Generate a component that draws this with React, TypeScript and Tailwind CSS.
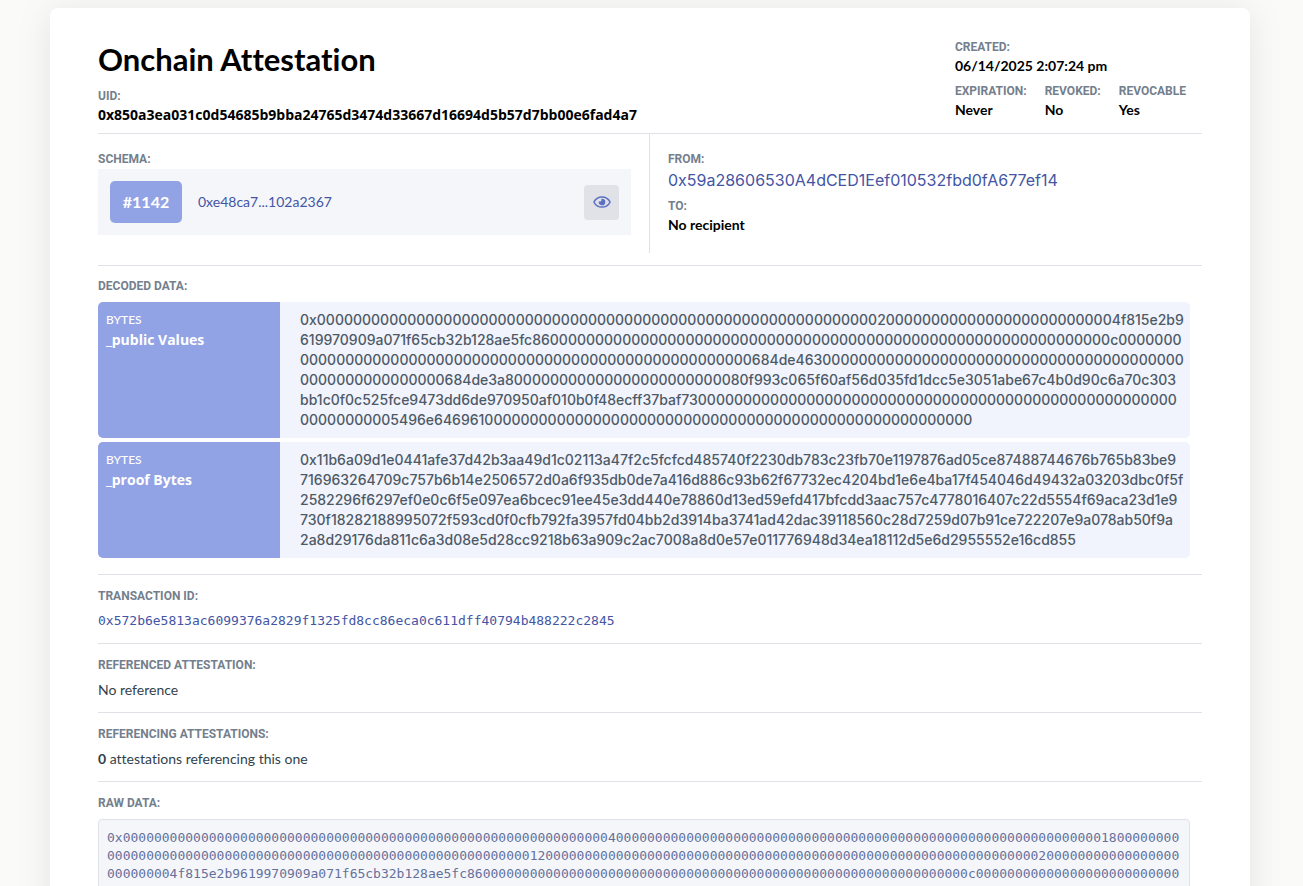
import type { ReactNode } from "react";

const zeros = (n: number) => "0".repeat(n);

const publicValues = [
  `0x${zeros(62)}2${zeros(25)}4f815e2b9`,
  `619970909a071f65cb32b128ae5fc86${zeros(62)}c${zeros(7)}`,
  `${zeros(50)}684de463${zeros(40)}`,
  `${zeros(16)}684de3a8${zeros(24)}80f993c065f60af56d035fd1dcc5e3051abe67c4b0d90c6a70c303`,
  `bb1c0f0c525fce9473dd6de970950af010b0f48ecff37baf73${zeros(53)}`,
  `${zeros(10)}5496e646961${zeros(54)}`,
];

const proofBytes = [
  "0x11b6a09d1e0441afe37d42b3aa49d1c02113a47f2c5fcfcd485740f2230db783c23fb70e1197876ad05ce87488744676b765b83be9",
  "716963264709c757b6b14e2506572d0a6f935db0de7a416d886c93b62f67732ec4204bd1e6e4ba17f454046d49432a03203dbc0f5f",
  "2582296f6297ef0e0c6f5e097ea6bcec91ee45e3dd440e78860d13ed59efd417bfcdd3aac757c4778016407c22d5554f69aca23d1e9",
  "730f18282188995072f593cd0f0cfb792fa3957fd04bb2d3914ba3741ad42dac39118560c28d7259d07b91ce722207e9a078ab50f9a",
  "2a8d29176da811c6a3d08e5d28cc9218b63a909c2ac7008a8d0e57e011776948d34ea18112d5e6d2955552e16cd855",
];

const rawData = [
  `0x${zeros(62)}40${zeros(61)}18${zeros(8)}`,
  `${zeros(54)}120${zeros(62)}2${zeros(17)}`,
  `${zeros(8)}4f815e2b9619970909a071f65cb32b128ae5fc86${zeros(62)}c${zeros(26)}`,
  `${zeros(31)}684de463${zeros(56)}684de3a8${zeros(24)}80f993c065`,
];

function Label({ children }: { children: ReactNode }) {
  return (
    <h2 className="font-['Roboto',sans-serif] text-xs leading-4 font-bold text-[#747f8d] uppercase">{children}</h2>
  );
}

function Fact({ label, children }: { label: string; children: ReactNode }) {
  return (
    <div>
      <Label>{label}</Label>
      <p className="mt-0.5 text-sm leading-[18px] font-bold text-black">{children}</p>
    </div>
  );
}

function DecodedRow({ type, name, lines }: { type: string; name: string; lines: string[] }) {
  return (
    <div className="mr-3 flex overflow-hidden rounded-[5px] bg-[#f1f3fd]">
      <div className="w-[182px] shrink-0 bg-[#92a3e5] px-2 pt-2 text-white">
        <div className="text-xs leading-5 font-medium">{type}</div>
        <div className="font-['Open_Sans',sans-serif] text-sm leading-5 font-bold">{name}</div>
      </div>
      <div className="min-w-0 py-2 pr-2 pl-5 font-['Inter',sans-serif] text-sm leading-5 font-medium text-[#4d5a66]">
        {lines.map((line, i) => (
          <span key={i} className="block whitespace-nowrap">{line}</span>
        ))}
      </div>
    </div>
  );
}

function Section({ label, children }: { label: string; children: ReactNode }) {
  return (
    <section className="border-t border-[#dfe1e6] pt-[13px] pb-3">
      <Label>{label}</Label>
      <div className="mt-[7px] text-sm leading-5 text-[#333f4b]">{children}</div>
    </section>
  );
}

export default function App() {
  return (
    <div className="h-screen overflow-hidden bg-[#fafaf8] pt-2 pr-[53px] pl-[50px] font-['Lato',sans-serif] [font-variant-ligatures:none]">
      <main className="mx-auto max-w-[1200px] rounded-lg bg-white px-12 pt-8 pb-12 shadow-[0_4px_33px_rgba(120,120,120,0.16)]">
        <header className="flex justify-between pb-[9px]">
          <div className="pt-px">
            <h1 className="mb-[11px] text-[31px] leading-9 font-bold text-black">Onchain Attestation</h1>
            <Fact label="UID:">
              <span className="font-['Open_Sans',sans-serif]">
                0x850a3ea031c0d54685b9bba24765d3474d33667d16694d5b57d7bb00e6fad4a7
              </span>
            </Fact>
          </div>
          <div className="-mt-px mr-4 flex flex-col gap-2">
            <Fact label="Created:">06/14/2025 2:07:24 pm</Fact>
            <div className="flex gap-[18px]">
              <Fact label="Expiration:">Never</Fact>
              <Fact label="Revoked:">No</Fact>
              <Fact label="Revocable">Yes</Fact>
            </div>
          </div>
        </header>

        <div className="grid grid-cols-2 border-t border-[#dfe1e6] pb-3">
          <div className="border-r border-[#dfe1e6] pt-[17px] pr-[18px] pb-[18px]">
            <Label>Schema:</Label>
            <div className="mt-0.5 flex items-center bg-[#f5f6fa] p-3">
              <span className="flex h-[42px] w-[72px] items-center justify-center rounded-[5px] bg-[#92a3e5] text-base font-bold text-white">
                #1142
              </span>
              <a href="#schema" className="ml-4 text-sm text-[#4355a4]">0xe48ca7...102a2367</a>
              <button type="button" aria-label="View schema" className="ml-auto flex size-[35px] items-center justify-center rounded bg-[#e1e2e8]">
                <svg width="18" height="12" viewBox="0 0 18 12" fill="none" aria-hidden="true">
                  <path d="M.9 6C2.5 2.700 5.400 .9 9 .9S15.500 2.700 17.100 6C15.500 9.300 12.600 11.100 9 11.100S2.500 9.300 .9 6Z" stroke="#5c70c4" strokeWidth="1.500" strokeLinejoin="round" />
                  <path d="M9 2.700a3.300 3.300 0 1 1-3.200 2.600c.8.500 1.800.3 2.300-.4.500-.7.500-1.500.1-2.100.3-.1.500-.1.800-.1Z" fill="#5c70c4" />
                </svg>
              </button>
            </div>
          </div>
          <div className="pt-[17px] pl-[18px]">
            <Label>From:</Label>
            <a href="#from" className="mt-0.5 mb-[7px] block font-['Inter',sans-serif] text-base leading-[22px] text-[#4355a4]">
              0x59a28606530A4dCED1Eef010532fbd0fA677ef14
            </a>
            <Fact label="To:">No recipient</Fact>
          </div>
        </div>

        <section className="border-t border-[#dfe1e6] pt-3 pb-4">
          <Label>Decoded Data:</Label>
          <div className="mt-2 flex flex-col gap-1">
            <DecodedRow type="BYTES" name="_public Values" lines={publicValues} />
            <DecodedRow type="BYTES" name="_proof Bytes" lines={proofBytes} />
          </div>
        </section>

        <Section label="Transaction ID:">
          <a href="#tx" className="block font-['DejaVu_Sans_Mono',monospace] text-[13px] leading-5 text-[#4355a4]">
            0x572b6e5813ac6099376a2829f1325fd8cc86eca0c611dff40794b488222c2845
          </a>
        </Section>
        <Section label="Referenced Attestation:">No reference</Section>
        <Section label="Referencing Attestations:">
          <b>0</b> attestations referencing this one
        </Section>
        <Section label="Raw Data:">
          <div className="mt-2 mr-3 rounded border border-[#dfe1e8] bg-[#f5f6fa] px-2 py-[9px] font-['DejaVu_Sans_Mono',monospace] text-[13px] leading-[18px] text-[#65719b]">
            {rawData.map((line, i) => (
              <span key={i} className="block whitespace-nowrap">{line}</span>
            ))}
          </div>
        </Section>
      </main>
    </div>
  );
}
